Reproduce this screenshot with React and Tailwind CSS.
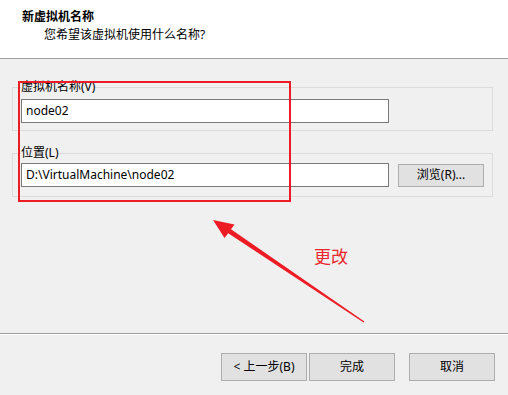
export default function App() {
  const font = { fontFamily: '"Noto Sans", "Noto Sans CJK SC", sans-serif' };
  return (
    <div
      className="relative w-[508px] h-[395px] bg-[#f0f0f0] flex flex-col overflow-hidden text-[12px] text-black"
      style={font}
    >
      {/* header */}
      <div className="h-[59px] bg-white border-b border-[#a0a0a0] flex flex-col">
        <div className="pl-[22px] pt-[9px] font-bold leading-[16px]">新虚拟机名称</div>
        <div className="pl-[44px] pt-[2px] leading-[16px]">您希望该虚拟机使用什么名称?</div>
      </div>

      {/* content */}
      <div className="flex-1 px-[12px] pt-[20px] flex flex-col">
        <fieldset className="w-[481px] border border-[#dcdcdc] px-[8px] pb-[7px]">
          <legend className="px-0 leading-[16px]">虚拟机名称(V)</legend>
          <div className="mt-[4px] w-[368px] h-[24px] bg-white border border-[#7a7a7a] flex items-center pl-[4px] leading-[16px]">
            node02
          </div>
        </fieldset>
        <fieldset className="mt-[14px] w-[481px] border border-[#dcdcdc] px-[8px] pb-[9px]">
          <legend className="px-0 leading-[16px]">位置(L)</legend>
          <div className="mt-[2px] flex items-center gap-[9px]">
            <div className="w-[368px] h-[24px] bg-white border border-[#7a7a7a] flex items-center pl-[4px] leading-[16px]">
              D:\VirtualMachine\node02
            </div>
            <button className="w-[86px] h-[23px] bg-[#e1e1e1] border border-[#adadad] flex items-center justify-center leading-[16px]">
              浏览(R)...
            </button>
          </div>
        </fieldset>
      </div>

      {/* footer */}
      <div className="relative h-[62px] border-t border-[#a0a0a0] flex justify-end items-start pt-[19px] pr-[13px]">
        <div className="absolute left-0 right-0 top-0 h-px bg-white" />
        <button className="w-[86px] h-[28px] bg-[#e1e1e1] border border-[#adadad] flex items-center justify-center leading-[16px]">
          &lt; 上一步(B)
        </button>
        <button className="ml-[2px] w-[86px] h-[28px] bg-[#e1e1e1] border border-[#adadad] flex items-center justify-center leading-[16px]">
          完成
        </button>
        <button className="ml-[14px] w-[86px] h-[28px] bg-[#e1e1e1] border border-[#adadad] flex items-center justify-center leading-[16px]">
          取消
        </button>
      </div>

      {/* annotation overlay */}
      <div className="absolute left-[18px] top-[81px] w-[273px] h-[121px] border-2 border-[#ed1c24] pointer-events-none" />
      <svg className="absolute left-0 top-0 pointer-events-none" width="508" height="395">
        <polygon
          fill="#ed1c24"
          points="213,220 234.5,224.5 231,229.2 364.4,321.6 363.6,322.4 228.2,233.3 224.5,238"
        />
      </svg>
      <div
        className="absolute left-[314px] top-[245px] text-[17px] leading-[22px] text-[#e8262b]"
        style={{ fontFamily: '"Noto Sans CJK SC", sans-serif' }}
      >
        更改
      </div>
    </div>
  );
}
